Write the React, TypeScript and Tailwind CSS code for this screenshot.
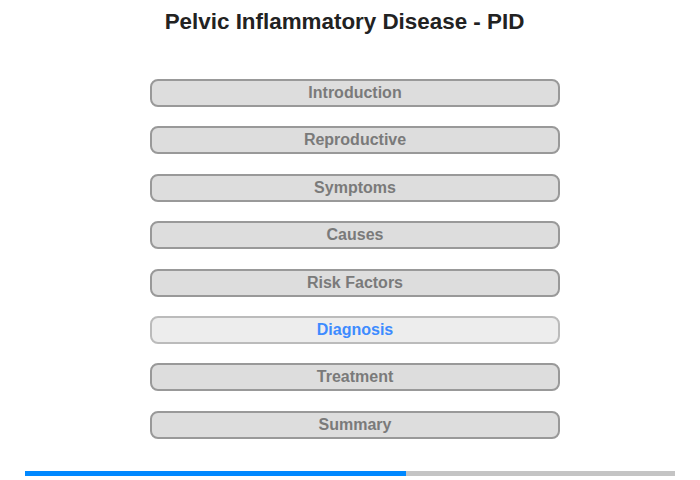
const sections = [
  "Introduction",
  "Reproductive",
  "Symptoms",
  "Causes",
  "Risk Factors",
  "Diagnosis",
  "Treatment",
  "Summary",
];

export default function App() {
  const active = "Diagnosis";
  const progress = 381 / 650;

  return (
    <div className="w-[700px] h-[480px] bg-white flex flex-col items-center font-['Liberation_Sans',Arial,sans-serif]">
      <h1 className="mt-[9px] text-[22.4px] leading-[26px] font-bold text-[#222] pr-[11px]">
        Pelvic Inflammatory Disease - PID
      </h1>

      <div className="mt-[44px] ml-[10px] flex flex-col gap-[19.4px]">
        {sections.map((s) => (
          <div
            key={s}
            className={
              s === active
                ? "w-[410px] h-[28px] rounded-[8px] border-2 border-[#bbb] bg-[#ededed] flex items-center justify-center text-[16px] font-bold text-[#3d8bff]"
                : "w-[410px] h-[28px] rounded-[8px] border-2 border-[#999] bg-[#dddddd] flex items-center justify-center text-[16px] font-bold text-[#7a7a7a]"
            }
          >
            {s}
          </div>
        ))}
      </div>

      <div className="mt-auto mb-[4px] w-[650px] h-[5px] bg-[#c4c4c4] flex">
        <div className="h-full bg-[#0088ff]" style={{ width: `${progress * 100}%` }} />
      </div>
    </div>
  );
}
